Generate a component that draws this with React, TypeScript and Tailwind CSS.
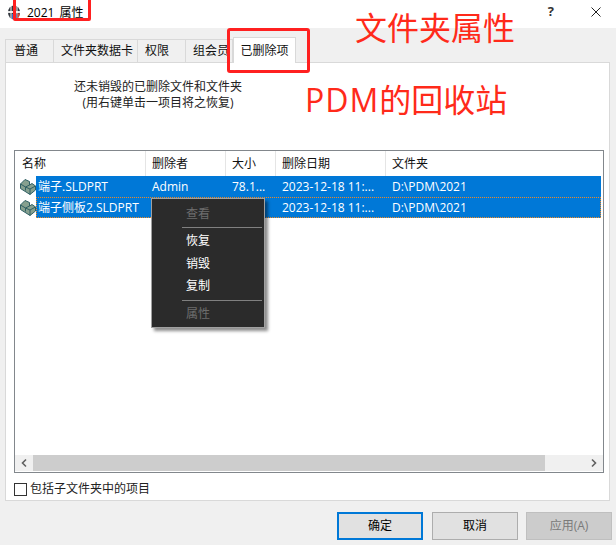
// App.tsx
const FONT = "font-['Open_Sans','Noto_Sans_CJK_SC',sans-serif]"

const TABS = [
  { label: '普通', width: 'w-[49px] pl-[8px]' },
  { label: '文件夹数据卡', width: 'w-[84px] pl-[7px]' },
  { label: '权限', width: 'w-[48px] pl-[7px]' },
  { label: '组会员', width: 'w-[47px] pl-[7px]' },
]

const COLUMNS = [
  { label: '名称', width: 'w-[131px] pl-[7px]' },
  { label: '删除者', width: 'w-[80px] pl-[6px]' },
  { label: '大小', width: 'w-[50px] pl-[6px]' },
  { label: '删除日期', width: 'w-[110px] pl-[6px]' },
  { label: '文件夹', width: 'flex-1 pl-[6px]' },
]

function PartIcon() {
  return (
    <svg width="16" height="17" viewBox="0 0 16 17" className="shrink-0">
      <path d="M0.5 6 L5 1.5 L9.5 3.5 L9.5 7 L12 5.5 L15.5 8 L15.5 12 L10 16.5 L0.5 10.5 Z" fill="#86a08f" stroke="#2f5f63" strokeWidth="1" />
      <path d="M0.5 6 L5.5 9 L5.5 12.5 M5.5 9 L9.5 7 M10 11 L10 16.5 M10 11 L15.5 8 M5.5 9 L10 11" fill="none" stroke="#2f5f63" strokeWidth="1" />
    </svg>
  )
}

function FileRow({ name, by, size, focused }: { name: string; by: string; size: string; focused?: boolean }) {
  return (
    <div className="flex h-[21px] shrink-0 items-center pl-[5px] pr-[2px]">
      <PartIcon />
      <div
        className={`flex h-full flex-1 items-center bg-[#0078d7] text-white ${
          focused ? 'outline-1 -outline-offset-1 outline-dotted outline-[#f08a24]' : ''
        }`}
      >
        <div className="w-[110px] pl-[2px] truncate">{name}</div>
        <div className="w-[80px] pl-[6px]">{by}</div>
        <div className="w-[50px] pl-[6px]">{size}</div>
        <div className="w-[110px] pl-[6px]">2023-12-18 11:...</div>
        <div className="flex-1 pl-[6px]">D:\PDM\2021</div>
      </div>
    </div>
  )
}

function MenuItem({ label, disabled }: { label: string; disabled?: boolean }) {
  return (
    <div className={`flex h-[22.5px] items-center pl-[34px] ${disabled ? 'text-[#6d6d6d]' : 'text-white'}`}>{label}</div>
  )
}

function Button({ label, primary, disabled }: { label: string; primary?: boolean; disabled?: boolean }) {
  return (
    <div
      className={`flex h-[28px] w-[86px] items-center justify-center ${
        primary
          ? 'mr-[1px] border-2 border-[#0078d7] bg-[#e1e1e1] text-black'
          : disabled
            ? 'border border-[#bfbfbf] bg-[#cccccc] text-[#7a7a7a]'
            : 'border border-[#adadad] bg-[#e1e1e1] text-black'
      }`}
    >
      {label}
    </div>
  )
}

export default function App() {
  return (
    <div className={`relative flex h-[545px] w-[616px] flex-col overflow-hidden bg-[#f0f0f0] text-[12px] text-[#111] ${FONT}`}>
      {/* Title bar */}
      <div className="flex h-[28px] shrink-0 items-center bg-white pl-[7px]">
        <svg width="14" height="15" viewBox="0 0 14 15" className="mt-[-3px]">
          <ellipse cx="7" cy="7.5" rx="6" ry="7" fill="#33383f" />
          <path d="M1 6 L13 6 L13 8 L1 8 Z" fill="#e8e8e8" />
          <path d="M4 1 L4 14 M10 1 L10 14" stroke="#fff" strokeWidth="1" />
          <path d="M5 9 L9.5 9 L9.5 14 L5 14 Z" fill="#2f6fd0" />
          <path d="M10.5 8.5 L13 8.5 L12 12 L10.5 13 Z" fill="#d04a3a" />
        </svg>
        <span className="ml-[6px] mt-[-3px] text-[12px] text-black [word-spacing:2px]">2021 属性</span>
        <span className="ml-auto mr-[36px] mt-[-4px] text-[13px] font-bold text-[#333]">?</span>
        <svg width="12" height="12" viewBox="0 0 12 12" className="mr-[14px] mt-[-4px]">
          <path d="M1.5 1.5 L10.5 10.5 M10.5 1.5 L1.5 10.5" stroke="#222" strokeWidth="1" />
        </svg>
      </div>

      {/* Tabs */}
      <div className="mt-[9px] flex h-[25px] shrink-0 items-end pl-[5px]">
        {TABS.map(tab => (
          <div
            key={tab.label}
            className={`flex h-[23px] ${tab.width} items-center overflow-hidden whitespace-nowrap border border-b-0 border-l-0 border-[#d9d9d9] bg-[#f0f0f0] first:border-l`}
          >
            {tab.label}
          </div>
        ))}
        <div className="z-10 mb-[-1px] flex h-[26px] w-[63px] items-center justify-center border border-b-0 border-[#d9d9d9] bg-white">
          已删除项
        </div>
      </div>

      {/* Panel */}
      <div className="ml-[5px] mr-[6px] flex h-[439px] shrink-0 flex-col border border-[#d9d9d9] bg-white px-[8px]">
        <div className="mt-[16px] h-[71px] w-[288px] text-center leading-[16px] text-[#222]">
          <div>还未销毁的已删除文件和文件夹</div>
          <div>(用右键单击一项目将之恢复)</div>
        </div>

        {/* List */}
        <div className="flex h-[323px] w-[590px] flex-col border border-[#82878c]">
          <div className="flex h-[25px] shrink-0">
            {COLUMNS.map(col => (
              <div key={col.label} className={`${col.width} flex items-center border-r border-[#e5e5e5] last:border-r-0`}>
                {col.label}
              </div>
            ))}
          </div>
          <FileRow name="端子.SLDPRT" by="Admin" size="78.1..." />
          <FileRow name="端子侧板2.SLDPRT" by="" size="" focused />
          <div className="flex-1" />
          <div className="mb-[1px] flex h-[16px] shrink-0 items-center bg-[#f0f0f0]">
            <svg width="18" height="16" viewBox="0 0 18 16" className="shrink-0">
              <path d="M11 4.5 L7.5 8 L11 11.5" fill="none" stroke="#606060" strokeWidth="1.6" />
            </svg>
            <div className="h-full w-[512px] bg-[#cdcdcd]" />
            <div className="flex-1" />
            <svg width="18" height="16" viewBox="0 0 18 16" className="shrink-0">
              <path d="M7 4.5 L10.5 8 L7 11.5" fill="none" stroke="#606060" strokeWidth="1.6" />
            </svg>
          </div>
        </div>

        {/* Checkbox */}
        <div className="mt-[7px] flex items-center gap-[3px]">
          <div className="h-[13px] w-[13px] border border-[#333] bg-white" />
          <span className="text-[#222]">包括子文件夹中的项目</span>
        </div>
      </div>

      {/* Buttons */}
      <div className="mt-[11px] flex justify-end gap-[8px] pr-[4px]">
        <Button label="确定" primary />
        <Button label="取消" />
        <Button label="应用(A)" disabled />
      </div>

      {/* Context menu */}
      <div className="absolute left-[151px] top-[198px] flex h-[130px] w-[114px] flex-col border border-[#a0a0a0] bg-[#2b2b2b] pt-[3.5px] shadow-[3px_3px_3px_rgba(0,0,0,0.45)]">
        <MenuItem label="查看" disabled />
        <div className="mb-[2.5px] mt-[1.5px] ml-[30px] mr-[2px] h-px shrink-0 bg-[#808080]" />
        <MenuItem label="恢复" />
        <MenuItem label="销毁" />
        <MenuItem label="复制" />
        <div className="my-[2px] ml-[30px] mr-[2px] h-px shrink-0 bg-[#808080]" />
        <MenuItem label="属性" disabled />
      </div>

      {/* Red annotations */}
      <div className="absolute left-[13px] top-[-6px] h-[27px] w-[78px] rounded-[2px] border-[3px] border-[#ff2020]" />
      <div className="absolute left-[227px] top-[28px] h-[45px] w-[83px] rounded-[3px] border-[3px] border-[#ff2020]" />
      <div className="absolute left-[355px] top-[8px] text-[32px] leading-[40px] text-[#ff2a1a]">文件夹属性</div>
      <div className="absolute left-[305px] top-[79px] text-[32px] leading-[42px] text-[#ff2a1a]">
        <span className="tracking-[1px]">PDM</span>的回收站
      </div>
    </div>
  )
}
